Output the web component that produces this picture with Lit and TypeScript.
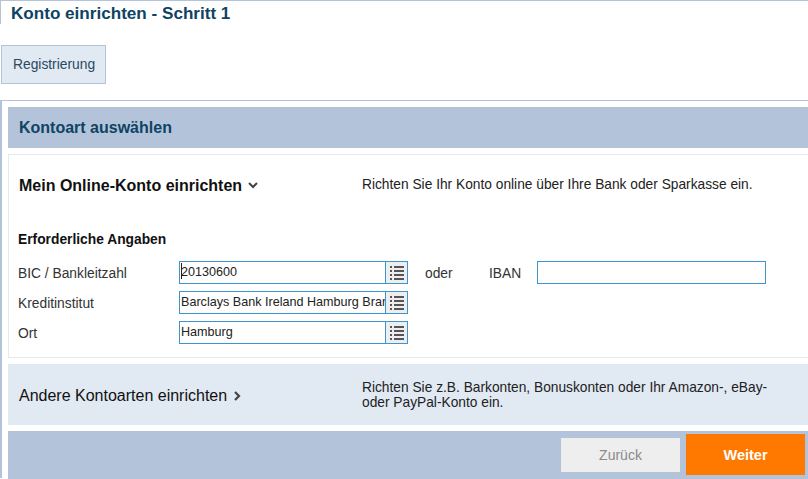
import { LitElement, html, css } from "lit";
import { customElement } from "lit/decorators.js";

const listIcon = html`<svg width="16" height="16" viewBox="0 0 16 16" fill="#555">
  <rect x="1" y="1" width="2" height="2" /><rect x="5" y="1" width="10" height="2" />
  <rect x="1" y="5" width="2" height="2" /><rect x="5" y="5" width="10" height="2" />
  <rect x="1" y="9" width="2" height="2" /><rect x="5" y="9" width="10" height="2" />
  <rect x="1" y="13" width="2" height="2" /><rect x="5" y="13" width="10" height="2" />
</svg>`;

@customElement("app-root")
export class AppRoot extends LitElement {
  static styles = css`
    :host {
      display: block;
      width: 808px;
      height: 479px;
      overflow: hidden;
      background: #fff;
      font-family: "Liberation Sans", Arial, sans-serif;
      font-size: 14px;
      color: #222;
    }
    .title-bar {
      height: 24px;
      border-top: 1px solid #b3c4da;
      border-left: 1px solid #b3c4da;
      padding-left: 10px;
      box-sizing: border-box;
      font-size: 17.1px;
      font-weight: bold;
      line-height: 25px;
      color: #0e4363;
    }
    .tabs {
      display: flex;
      padding: 21px 0 0 1px;
      height: 55px;
    }
    .tab {
      width: 105px;
      height: 39px;
      box-sizing: border-box;
      background: #e1e9f3;
      border: 1px solid #b3c4da;
      padding-left: 11px;
      font-size: 13.8px;
      line-height: 37px;
      color: #2b4a60;
    }
    .panel {
      border-top: 1px solid #b3c4da;
      border-left: 2px solid #b3c4da;
      padding: 6px 0 0 6px;
      height: 378px;
      box-sizing: border-box;
    }
    .panel-head {
      height: 41px;
      background: #b3c4da;
      padding-left: 11px;
      font-size: 16px;
      font-weight: bold;
      line-height: 41px;
      color: #0e4363;
    }
    .card {
      margin-top: 6px;
      height: 204px;
      box-sizing: border-box;
      border: 1px solid #e1e9f3;
      border-right: none;
      padding: 0 0 0 9px;
    }
    .card-top {
      display: flex;
      height: 61px;
      align-items: center;
    }
    .card-top h2 {
      margin: 0 0 0 1px;
      width: 343px;
      font-size: 16px;
      font-weight: bold;
      color: #111;
      display: flex;
      align-items: center;
      gap: 6px;
    }
    .card-top p,
    .other p {
      margin: 0;
      font-size: 13.75px;
      line-height: 15px;
      color: #222;
    }
    .card-top p {
      padding-bottom: 3px;
    }
    h3 {
      margin: 16px 0 14px;
      font-size: 13.8px;
      line-height: 15px;
      font-weight: bold;
      color: #111;
    }
    .row {
      display: flex;
      align-items: center;
      height: 23px;
      margin-bottom: 7px;
      font-size: 13.8px;
      color: #333;
    }
    .row label {
      width: 161px;
      padding-top: 2px;
    }
    .or,
    .iban-label {
      padding-top: 2px;
    }
    .field {
      position: relative;
      display: flex;
      width: 229px;
      height: 23px;
      box-sizing: border-box;
      border: 1px solid #3f93cf;
    }
    .field input {
      width: 205px;
      height: 100%;
      border: none;
      outline: none;
      padding: 0 0 2px 1px;
      margin: 0;
      box-sizing: border-box;
      background: transparent;
      font-family: inherit;
      font-size: 12.6px;
      color: #222;
    }
    .caret {
      position: absolute;
      left: 1px;
      top: 1px;
      width: 1px;
      height: 16px;
      background: #222;
    }
    .field .pick {
      flex: 1;
      display: flex;
      align-items: center;
      justify-content: center;
      background: #eeeeee;
      border-left: 1px solid #3f93cf;
    }
    .or {
      width: 64px;
      margin-left: 17px;
    }
    .iban-label {
      width: 48px;
    }
    .iban {
      width: 229px;
    }
    .other {
      margin-top: 6px;
      height: 61px;
      background: #e1e9f3;
      display: flex;
      align-items: center;
      padding-left: 11px;
    }
    .other h2 {
      margin: 2px 0 0;
      width: 343px;
      font-size: 16px;
      font-weight: normal;
      color: #111;
      display: flex;
      align-items: center;
      gap: 7px;
    }
    .other p {
      width: 420px;
    }
    .footer {
      margin-top: 6px;
      height: 48px;
      background: #b3c4da;
      display: flex;
      align-items: flex-start;
      justify-content: flex-end;
      gap: 6px;
      padding: 3px 3px 0 0;
      box-sizing: border-box;
    }
    .btn {
      width: 119px;
      border: none;
      padding: 0;
      font-family: inherit;
      font-size: 14px;
    }
    .back {
      height: 34px;
      margin-top: 4px;
      background: #eeeeee;
      color: #8a8a8a;
    }
    .next {
      height: 41px;
      background: #ff7900;
      color: #fff;
      font-size: 14.5px;
      font-weight: bold;
    }
  `;

  render() {
    return html`
      <div class="title-bar">Konto einrichten - Schritt 1</div>
      <div class="tabs"><div class="tab">Registrierung</div></div>
      <div class="panel">
        <div class="panel-head">Kontoart auswählen</div>
        <div class="card">
          <div class="card-top">
            <h2>
              Mein Online-Konto einrichten
              <svg width="10" height="7" viewBox="0 0 10 7" fill="none" stroke="#444" stroke-width="2">
                <path d="M1 1l4 4 4-4" />
              </svg>
            </h2>
            <p>Richten Sie Ihr Konto online über Ihre Bank oder Sparkasse ein.</p>
          </div>
          <h3>Erforderliche Angaben</h3>
          <div class="row">
            <label>BIC / Bankleitzahl</label>
            <div class="field">
              <input .value=${"20130600"} />
              <span class="caret"></span>
              <div class="pick">${listIcon}</div>
            </div>
            <span class="or">oder</span>
            <span class="iban-label">IBAN</span>
            <div class="field iban"><input /></div>
          </div>
          <div class="row">
            <label>Kreditinstitut</label>
            <div class="field">
              <input .value=${"Barclays Bank Ireland Hamburg Branch"} />
              <div class="pick">${listIcon}</div>
            </div>
          </div>
          <div class="row">
            <label>Ort</label>
            <div class="field">
              <input .value=${"Hamburg"} />
              <div class="pick">${listIcon}</div>
            </div>
          </div>
        </div>
        <div class="other">
          <h2>
            Andere Kontoarten einrichten
            <svg width="7" height="10" viewBox="0 0 7 10" fill="none" stroke="#444" stroke-width="2.2">
              <path d="M1 1l4 4-4 4" />
            </svg>
          </h2>
          <p>Richten Sie z.B. Barkonten, Bonuskonten oder Ihr Amazon-, eBay- oder PayPal-Konto ein.</p>
        </div>
        <div class="footer">
          <button class="btn back">Zurück</button>
          <button class="btn next">Weiter</button>
        </div>
      </div>
    `;
  }
}
